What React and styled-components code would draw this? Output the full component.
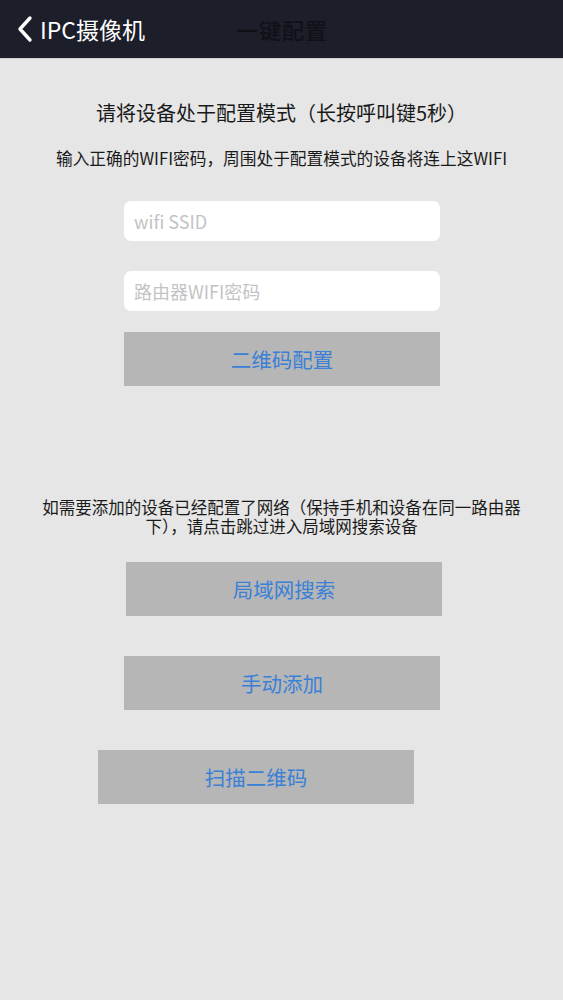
import React from "react";
import styled, { createGlobalStyle } from "styled-components";

const GlobalStyle = createGlobalStyle`
  html, body {
    margin: 0;
    padding: 0;
    background: #e6e6e6;
    font-family: "Noto Sans CJK SC", "Noto Sans", sans-serif;
  }
`;

const Page = styled.div`
  width: 563px;
  min-height: 1000px;
  background: #e6e6e6;
`;

const NavBar = styled.div`
  height: 59px;
  background: #1c1e2a;
  border-bottom: 1px solid #cfcfcf;
  display: flex;
  align-items: center;
  padding: 0 0 0 16px;
  box-sizing: border-box;
`;

const BackButton = styled.div`
  display: flex;
  align-items: center;
  gap: 6px;
  color: #ffffff;
  font-size: 23px;
  width: 220px;
`;

const NavTitle = styled.div`
  color: #101117;
  font-size: 22px;
  font-weight: 500;
  letter-spacing: 1px;
`;

const Content = styled.div`
  display: flex;
  flex-direction: column;
  padding-top: 39px;
`;

const Heading = styled.div`
  text-align: center;
  font-size: 20px;
  color: #1a1a1a;
  line-height: 30px;
`;

const Hint = styled.div`
  text-align: center;
  font-size: 16.7px;
  color: #1a1a1a;
  line-height: 24px;
  margin-top: 18px;
`;

const Field = styled.input`
  display: block;
  width: 316px;
  height: 40px;
  box-sizing: border-box;
  margin: ${(p) => p.$top}px 0 0 124px;
  border: none;
  border-radius: 7px;
  background: #ffffff;
  padding: 0 10px;
  font-family: inherit;
  font-size: 18px;
  outline: none;
  &::placeholder {
    color: #c3c3c6;
  }
`;

const ActionButton = styled.button`
  display: flex;
  align-items: center;
  justify-content: center;
  width: 316px;
  height: 54px;
  margin: ${(p) => p.$top}px 0 0 ${(p) => p.$left}px;
  border: none;
  background: #b6b6b6;
  color: #3a80d6;
  font-family: inherit;
  font-size: 20.5px;
  padding: 0;
`;

const Note = styled.div`
  width: 500px;
  margin: 112px auto 0;
  text-align: center;
  font-size: 16.5px;
  line-height: 19px;
  color: #1a1a1a;
`;

const Chevron = () => (
  <svg width="18" height="28" viewBox="0 0 18 28">
    <path
      d="M14 3 L4 14 L14 25"
      fill="none"
      stroke="#fff"
      strokeWidth="3.4"
      strokeLinecap="round"
      strokeLinejoin="round"
    />
  </svg>
);

const App = () => {
  return (
    <>
      <GlobalStyle />
      <Page>
        <NavBar>
          <BackButton>
            <Chevron />
            IPC摄像机
          </BackButton>
          <NavTitle>一键配置</NavTitle>
        </NavBar>
        <Content>
          <Heading>请将设备处于配置模式（长按呼叫键5秒）</Heading>
          <Hint>输入正确的WIFI密码，周围处于配置模式的设备将连上这WIFI</Hint>
          <Field $top={31} placeholder="wifi SSID" />
          <Field $top={30} placeholder="路由器WIFI密码" />
          <ActionButton $top={21} $left={124}>
            二维码配置
          </ActionButton>
          <Note>
            如需要添加的设备已经配置了网络（保持手机和设备在同一路由器下），请点击跳过进入局域网搜索设备
          </Note>
          <ActionButton $top={26} $left={126}>
            局域网搜索
          </ActionButton>
          <ActionButton $top={40} $left={124}>
            手动添加
          </ActionButton>
          <ActionButton $top={40} $left={98}>
            扫描二维码
          </ActionButton>
        </Content>
      </Page>
    </>
  );
};

export default App;
